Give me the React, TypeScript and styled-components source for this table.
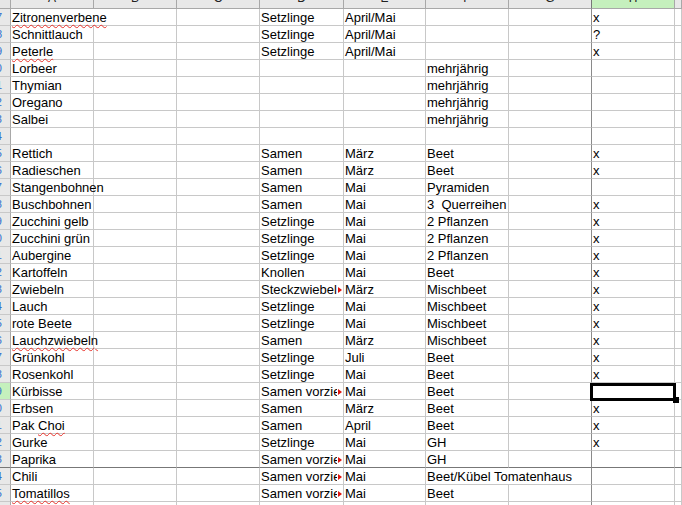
import React from 'react'
import styled, { createGlobalStyle } from 'styled-components'

const GlobalStyle = createGlobalStyle`
    html, body {
        margin: 0;
        padding: 0;
        background: #fff;
        overflow: hidden;
    }
`

interface PlantRow {
    a?: string
    d?: string
    e?: string
    f?: string
    h?: string
    spell?: string
    clip?: boolean
    spanA?: boolean
    spanF?: boolean
}

const rows: PlantRow[] = [
    { a: 'Zitronenverbene', d: 'Setzlinge', e: 'April/Mai', h: 'x', spell: 'Zitronenverbene', spanA: true },
    { a: 'Schnittlauch', d: 'Setzlinge', e: 'April/Mai', h: '?' },
    { a: 'Peterle', d: 'Setzlinge', e: 'April/Mai', h: 'x', spell: 'Peterle' },
    { a: 'Lorbeer', f: 'mehrjährig' },
    { a: 'Thymian', f: 'mehrjährig' },
    { a: 'Oregano', f: 'mehrjährig' },
    { a: 'Salbei', f: 'mehrjährig' },
    {},
    { a: 'Rettich', d: 'Samen', e: 'März', f: 'Beet', h: 'x' },
    { a: 'Radieschen', d: 'Samen', e: 'März', f: 'Beet', h: 'x' },
    { a: 'Stangenbohnen', d: 'Samen', e: 'Mai', f: 'Pyramiden' },
    { a: 'Buschbohnen', d: 'Samen', e: 'Mai', f: '3  Querreihen', h: 'x' },
    { a: 'Zucchini gelb', d: 'Setzlinge', e: 'Mai', f: '2 Pflanzen', h: 'x' },
    { a: 'Zucchini grün', d: 'Setzlinge', e: 'Mai', f: '2 Pflanzen', h: 'x' },
    { a: 'Aubergine', d: 'Setzlinge', e: 'Mai', f: '2 Pflanzen', h: 'x' },
    { a: 'Kartoffeln', d: 'Knollen', e: 'Mai', f: 'Beet', h: 'x' },
    { a: 'Zwiebeln', d: 'Steckzwiebeln', e: 'März', f: 'Mischbeet', h: 'x', clip: true },
    { a: 'Lauch', d: 'Setzlinge', e: 'Mai', f: 'Mischbeet', h: 'x' },
    { a: 'rote Beete', d: 'Setzlinge', e: 'Mai', f: 'Mischbeet', h: 'x' },
    { a: 'Lauchzwiebeln', d: 'Samen', e: 'März', f: 'Mischbeet', h: 'x', spell: 'Lauchzwiebeln' },
    { a: 'Grünkohl', d: 'Setzlinge', e: 'Juli', f: 'Beet', h: 'x' },
    { a: 'Rosenkohl', d: 'Setzlinge', e: 'Mai', f: 'Beet', h: 'x' },
    { a: 'Kürbisse', d: 'Samen vorziehen', e: 'Mai', f: 'Beet', clip: true },
    { a: 'Erbsen', d: 'Samen', e: 'März', f: 'Beet', h: 'x' },
    { a: 'Pak Choi', d: 'Samen', e: 'April', f: 'Beet', h: 'x', spell: 'Choi' },
    { a: 'Gurke', d: 'Setzlinge', e: 'Mai', f: 'GH', h: 'x' },
    { a: 'Paprika', d: 'Samen vorziehen', e: 'Mai', f: 'GH', clip: true },
    { a: 'Chili', d: 'Samen vorziehen', e: 'Mai', f: 'Beet/Kübel Tomatenhaus', clip: true, spanF: true },
    { a: 'Tomatillos', d: 'Samen vorziehen', e: 'Mai', f: 'Beet', clip: true, spell: 'Tomatillos' },
    {},
]

const columns = ['A', 'B', 'C', 'D', 'E', 'F', 'G', 'H', '']
const ACTIVE_COLUMN = 'H'
const ACTIVE_ROW = 22
const DIVIDER_ROW = 26

// underline the misspelled word the way the spell checker does
const withSpelling = (text: string, word?: string) => {
    if (!word || !text.includes(word)) return text
    const at = text.indexOf(word)
    return (
        <>
            {text.slice(0, at)}
            <Misspelled>{word}</Misspelled>
            {text.slice(at + word.length)}
        </>
    )
}

const App: React.FC = () => {
    return (
        <>
            <GlobalStyle />
            <StyledSheet>
                <StyledCorner />
                {columns.map((c, i) => (
                    <StyledColHead key={i} $active={c === ACTIVE_COLUMN} $edge={c === 'G'}>
                        <span>{c}</span>
                    </StyledColHead>
                ))}

                {rows.map((r, i) => {
                    const dark = i === DIVIDER_ROW
                    return (
                        <React.Fragment key={i}>
                            <StyledRowHead $active={i === ACTIVE_ROW} $dark={dark}>
                                <span>{i + 7}</span>
                            </StyledRowHead>
                            <StyledCell $dark={dark} $span={r.spanA ? 2 : 1}>
                                {r.a && withSpelling(r.a, r.spell)}
                            </StyledCell>
                            {!r.spanA && <StyledCell $dark={dark} />}
                            <StyledCell $dark={dark} />
                            <StyledCell $dark={dark}>
                                {r.d && (r.clip ? (
                                    <>
                                        <StyledClipped>{r.d}</StyledClipped>
                                        <StyledMore />
                                    </>
                                ) : r.d)}
                            </StyledCell>
                            <StyledCell $dark={dark}>{r.e}</StyledCell>
                            <StyledCell $dark={dark} $span={r.spanF ? 2 : 1} $edge={r.spanF}>
                                {r.f}
                            </StyledCell>
                            {!r.spanF && <StyledCell $dark={dark} $edge />}
                            <StyledCell $dark={dark} $top={i === ACTIVE_ROW}>
                                {r.h}
                                {i === ACTIVE_ROW && (
                                    <StyledSelection>
                                        <StyledHandle />
                                    </StyledSelection>
                                )}
                            </StyledCell>
                            <StyledCell $dark={dark} />
                        </React.Fragment>
                    )
                })}
            </StyledSheet>
        </>
    )
}

const StyledSheet = styled.div`
    display: grid;
    grid-template-columns: 11px 83px 83px 83px 84px 82px 83px 83px 83px 1fr;
    grid-template-rows: 9px;
    grid-auto-rows: 17px;
    width: 682px;
    height: 505px;
    overflow: hidden;

    font-family: "Liberation Sans", Arial, sans-serif;
    font-size: 13px;
    color: #000;
`

const StyledCorner = styled.div`
    background: #e6e6e6;
    border-right: 1px solid #a8a8a8;
    border-bottom: 1px solid #a8a8a8;
`

const StyledColHead = styled.div<{ $active?: boolean; $edge?: boolean }>`
    box-sizing: border-box;
    overflow: hidden;
    text-align: center;

    background: ${(p) => (p.$active ? '#c5f0bd' : '#e8e8e8')};
    border-right: 1px solid ${(p) => (p.$edge ? '#777' : '#a8a8a8')};
    border-bottom: 1px solid #a8a8a8;

    span {
        display: block;
        margin-top: -8px;
        line-height: 12px;
        font-size: 12px;
        color: #222;
    }
`

const StyledRowHead = styled.div<{ $active?: boolean; $dark?: boolean }>`
    box-sizing: border-box;
    overflow: hidden;
    display: flex;
    justify-content: flex-end;
    align-items: center;

    background: ${(p) => (p.$active ? '#c5f0bd' : '#e8e8e8')};
    border-right: 1px solid #a8a8a8;
    border-bottom: 1px solid ${(p) => (p.$dark ? '#777' : '#c8c8c8')};

    span {
        margin-right: 8px;
        font-size: 11px;
        color: #2f6fcf;
    }
`

const StyledCell = styled.div<{ $dark?: boolean; $span?: number; $edge?: boolean; $top?: boolean }>`
    box-sizing: border-box;
    position: relative;
    z-index: ${(p) => (p.$top ? 2 : 'auto')};
    grid-column: span ${(p) => p.$span || 1};

    display: flex;
    align-items: center;
    padding: 1px 0 0 1px;
    white-space: pre;
    line-height: 16px;

    border-right: 1px solid ${(p) => (p.$edge ? '#8a8a8a' : '#c8c8c8')};
    border-bottom: 1px solid ${(p) => (p.$dark ? '#777' : '#c8c8c8')};
`

const StyledClipped = styled.span`
    flex: 1;
    min-width: 0;
    overflow: hidden;
`

const StyledMore = styled.span`
    flex: none;
    width: 0;
    height: 0;
    margin: 0 1px 0 1px;
    border-left: 4px solid #e0140c;
    border-top: 3px solid transparent;
    border-bottom: 3px solid transparent;
`

const Misspelled = styled.span`
    text-decoration: underline wavy #e8322a;
    text-decoration-thickness: 1px;
    text-underline-offset: 2px;
`

const StyledSelection = styled.div`
    position: absolute;
    top: 0;
    left: -2px;
    right: -2px;
    bottom: -2px;
    border: 3px solid #000;
`

const StyledHandle = styled.div`
    position: absolute;
    right: -6px;
    bottom: -5px;
    width: 6px;
    height: 6px;
    background: #000;
`

export default App
